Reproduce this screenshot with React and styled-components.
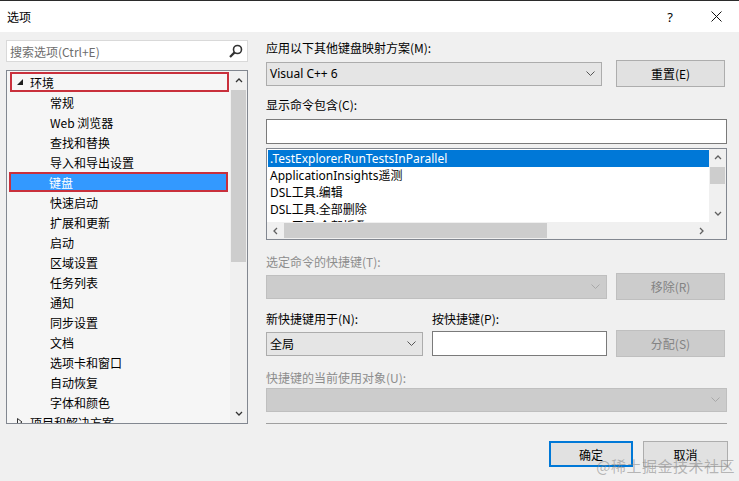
import React from 'react';
import styled, { createGlobalStyle } from 'styled-components';

const GlobalStyle = createGlobalStyle`
  body {
    margin: 0;
    background: #f0f0f0;
  }
  * { box-sizing: border-box; }
`;

const Window = styled.div`
  position: relative;
  width: 739px;
  height: 481px;
  background: #f0f0f0;
  font-family: "Noto Sans", "Noto Sans CJK SC", sans-serif;
  font-size: 12px;
  color: #000;
  overflow: hidden;
  border-top: 1px solid #2b2b2b;
`;

const TitleBar = styled.div`
  height: 31px;
  background: #fff;
  display: flex;
  align-items: center;
  padding-left: 7px;
`;

const Title = styled.div`
  flex: 1;
  font-family: "Noto Sans CJK SC", sans-serif;
  font-size: 12px;
  padding-bottom: 1px;
`;

const TitleButton = styled.div`
  width: ${p => p.$w}px;
  display: flex;
  justify-content: center;
  align-items: center;
  font-size: 13px;
`;

const Body = styled.div`
  display: grid;
  grid-template-columns: 242px 461px;
  column-gap: 18px;
  padding: 8px 0 0 6px;
`;

const Column = styled.div`
  display: flex;
  flex-direction: column;
`;

const SearchBox = styled.div`
  height: 22px;
  background: #fff;
  border: 1px solid #d9d9d9;
  display: flex;
  align-items: center;
  padding: 0 4px 0 3px;
  color: #6d6d6d;
  font-family: "Noto Sans CJK SC", sans-serif;
  font-size: 12px;
  justify-content: space-between;
`;

const Tree = styled.div`
  margin-top: 8px;
  height: 354px;
  border: 1px solid #828790;
  background: #f6f6f6;
  display: flex;
  overflow: hidden;
`;

const TreeRows = styled.div`
  flex: 1;
  padding-top: 1px;
  overflow: hidden;
`;

const TreeRow = styled.div`
  height: 20px;
  margin-left: ${p => (p.$selected ? 2 : 3)}px;
  width: 219px;
  display: flex;
  align-items: center;
  padding-left: ${p => p.$indent}px;
  font-family: "Noto Sans CJK SC", sans-serif;
  background: ${p => (p.$selected ? '#3399ff' : 'transparent')};
  color: ${p => (p.$selected ? '#fff' : '#000')};
  box-shadow: ${p => (p.$marked ? 'inset 0 0 0 2px #c9303c' : 'none')};
`;

const Expander = styled.span`
  width: 20px;
  display: flex;
  align-items: center;
  padding-left: 7px;
`;

const VScroll = styled.div`
  width: 17px;
  background: #f0f0f0;
  display: flex;
  flex-direction: column;
  align-items: center;
`;

const ScrollArrow = styled.div`
  height: ${p => p.$h || 17}px;
  width: 100%;
  display: flex;
  align-items: center;
  justify-content: center;
`;

const VThumb = styled.div`
  width: 15px;
  height: ${p => p.$h}px;
  margin-top: ${p => p.$top}px;
  background: #cdcdcd;
`;

const Spacer = styled.div`
  flex: 1;
`;

const Label = styled.div`
  height: 16px;
  line-height: 16px;
  margin-top: ${p => p.$mt || 0}px;
  font-family: "Noto Sans CJK SC", sans-serif;
  color: ${p => (p.$disabled ? '#8d8d8d' : '#000')};
  width: ${p => (p.$w ? `${p.$w}px` : 'auto')};
`;

const Row = styled.div`
  display: flex;
  align-items: center;
  height: 27px;
  margin-top: ${p => p.$mt || 0}px;
  gap: 9px;
`;

const LabelRow = styled.div`
  display: flex;
  margin-top: ${p => p.$mt || 0}px;
  gap: 0;
`;

const Combo = styled.div`
  width: ${p => p.$w}px;
  height: 24px;
  background: ${p => (p.$disabled ? '#cccccc' : '#e5e5e5')};
  border: 1px solid ${p => (p.$disabled ? '#bfbfbf' : '#acacac')};
  display: flex;
  align-items: center;
  justify-content: space-between;
  padding: 0 6px 0 3px;
  font-family: "Noto Sans", "Noto Sans CJK SC", sans-serif;
  margin-right: ${p => p.$mr || 0}px;
`;

const Button = styled.div`
  width: ${p => p.$w || 109}px;
  height: ${p => p.$h || 27}px;
  display: flex;
  align-items: center;
  justify-content: center;
  margin-left: ${p => p.$ml || 0}px;
  font-family: "Noto Sans CJK SC", sans-serif;
  background: ${p => (p.$disabled ? '#cccccc' : '#e1e1e1')};
  border: ${p =>
    p.$default ? '2px solid #0078d7' : `1px solid ${p.$disabled ? '#bfbfbf' : '#adadad'}`};
  color: ${p => (p.$disabled ? '#838383' : '#000')};
`;

const TextInput = styled.div`
  width: ${p => p.$w}px;
  height: 25px;
  margin-top: ${p => p.$mt || 0}px;
  background: #fff;
  border: 1px solid #7a7a7a;
`;

const ListBox = styled.div`
  margin-top: 4px;
  height: 92px;
  border: 1px solid #828790;
  background: #fff;
  display: grid;
  grid-template-columns: 1fr 17px;
  grid-template-rows: 73px 17px;
`;

const ListItems = styled.div`
  overflow: hidden;
  padding: 1px 0 0 1px;
`;

const ListItem = styled.div`
  height: 17px;
  line-height: 17px;
  padding-left: 2px;
  font-family: "Noto Sans", "Noto Sans CJK SC", sans-serif;
  font-size: 12px;
  white-space: nowrap;
  background: ${p => (p.$selected ? '#0078d7' : 'transparent')};
  color: ${p => (p.$selected ? '#fff' : '#000')};
`;

const HScroll = styled.div`
  background: #f0f0f0;
  display: flex;
  align-items: center;
`;

const HThumb = styled.div`
  width: 263px;
  height: 15px;
  background: #cdcdcd;
`;

const Corner = styled.div`
  background: #f0f0f0;
`;

const Separator = styled.div`
  margin-top: 11px;
  height: 1px;
  background: #a0a0a0;
`;

const Footer = styled.div`
  display: flex;
  justify-content: flex-end;
  gap: 10px;
  padding: 17px 11px 0 0;
`;

const Watermark = styled.div`
  position: absolute;
  right: 4px;
  bottom: 5px;
  font-family: "Noto Sans CJK SC", sans-serif;
  font-size: 15px;
  color: rgba(130, 130, 130, 0.55);
  letter-spacing: 0.5px;
`;

const Chevron = ({ dir = 'down', color = '#606060', size = 8 }) => {
  const pts = {
    down: '1,2 4,5 7,2',
    up: '1,5 4,2 7,5',
    left: '5,1 2,4 5,7',
    right: '3,1 6,4 3,7',
  }[dir];
  return (
    <svg width={size} height={size} viewBox="0 0 8 8">
      <polyline points={pts} fill="none" stroke={color} strokeWidth="1.3" />
    </svg>
  );
};

const ComboArrow = ({ color = '#555' }) => (
  <svg width="9" height="6" viewBox="0 0 9 6">
    <polyline points="0.5,0.5 4.5,4.5 8.5,0.5" fill="none" stroke={color} strokeWidth="1" />
  </svg>
);

const SearchIcon = () => (
  <svg width="14" height="14" viewBox="0 0 14 14">
    <circle cx="8.5" cy="5.5" r="4" fill="none" stroke="#333" strokeWidth="1.6" />
    <line x1="5.6" y1="8.4" x2="1" y2="13" stroke="#333" strokeWidth="2.2" />
  </svg>
);

const Expanded = () => (
  <svg width="6" height="6" viewBox="0 0 6 6">
    <polygon points="6,0 6,6 0,6" fill="#1e1e1e" />
  </svg>
);

const Collapsed = () => (
  <svg width="6" height="8" viewBox="0 0 6 8">
    <polygon points="0.5,0.5 5,4 0.5,7.5" fill="none" stroke="#333" strokeWidth="1" />
  </svg>
);

const CloseIcon = () => (
  <svg width="11" height="11" viewBox="0 0 11 11">
    <line x1="0.5" y1="0.5" x2="10.5" y2="10.5" stroke="#111" strokeWidth="1" />
    <line x1="10.5" y1="0.5" x2="0.5" y2="10.5" stroke="#111" strokeWidth="1" />
  </svg>
);

const children = [
  '常规', 'Web 浏览器', '查找和替换', '导入和导出设置', '键盘', '快速启动', '扩展和更新',
  '启动', '区域设置', '任务列表', '通知', '同步设置', '文档', '选项卡和窗口', '自动恢复', '字体和颜色',
];

const commands = [
  '.TestExplorer.RunTestsInParallel',
  'ApplicationInsights遥测',
  'DSL工具.编辑',
  'DSL工具.全部删除',
  'DSL工具.全部折叠',
];

export default function App() {
  return (
    <>
      <GlobalStyle />
      <Window>
        <TitleBar>
          <Title>选项</Title>
          <TitleButton $w={46}>?</TitleButton>
          <TitleButton $w={46}><CloseIcon /></TitleButton>
        </TitleBar>
        <Body>
          <Column>
            <SearchBox>
              <span>搜索选项(Ctrl+E)</span>
              <SearchIcon />
            </SearchBox>
            <Tree>
              <TreeRows>
                <TreeRow $indent={0} $marked>
                  <Expander><Expanded /></Expander>
                  环境
                </TreeRow>
                {children.map(c => (
                  <TreeRow key={c} $indent={40} $selected={c === '键盘'} $marked={c === '键盘'}>
                    {c}
                  </TreeRow>
                ))}
                <TreeRow $indent={0}>
                  <Expander><Collapsed /></Expander>
                  项目和解决方案
                </TreeRow>
              </TreeRows>
              <VScroll>
                <ScrollArrow $h={19}><Chevron dir="up" color="#333" /></ScrollArrow>
                <VThumb $h={172} $top={0} />
                <Spacer />
                <ScrollArrow $h={19}><Chevron dir="down" color="#333" /></ScrollArrow>
              </VScroll>
            </Tree>
          </Column>

          <Column>
            <Label>应用以下其他键盘映射方案(M):</Label>
            <Row $mt={4}>
              <Combo $w={336} $mr={5}>
                <span>Visual C++ 6</span>
                <ComboArrow />
              </Combo>
              <Button>重置(E)</Button>
            </Row>
            <Label $mt={10}>显示命令包含(C):</Label>
            <TextInput $w={461} $mt={6} />
            <ListBox>
              <ListItems>
                {commands.map((c, i) => (
                  <ListItem key={c} $selected={i === 0}>{c}</ListItem>
                ))}
              </ListItems>
              <VScroll>
                <ScrollArrow><Chevron dir="up" /></ScrollArrow>
                <VThumb $h={17} $top={1} />
                <Spacer />
                <ScrollArrow><Chevron dir="down" /></ScrollArrow>
              </VScroll>
              <HScroll>
                <ScrollArrow style={{ width: 17 }}><Chevron dir="left" /></ScrollArrow>
                <HThumb />
                <Spacer />
                <ScrollArrow style={{ width: 17 }}><Chevron dir="right" /></ScrollArrow>
              </HScroll>
              <Corner />
            </ListBox>
            <Label $mt={14} $disabled>选定命令的快捷键(T):</Label>
            <Row $mt={3}>
              <Combo $w={341} $disabled>
                <span />
                <ComboArrow color="#a8a8a8" />
              </Combo>
              <Button $disabled>移除(R)</Button>
            </Row>
            <LabelRow $mt={11}>
              <Label $w={166}>新快捷键用于(N):</Label>
              <Label>按快捷键(P):</Label>
            </LabelRow>
            <Row $mt={3}>
              <Combo $w={157}>
                <span style={{ fontFamily: '"Noto Sans CJK SC", sans-serif' }}>全局</span>
                <ComboArrow />
              </Combo>
              <TextInput $w={175} />
              <Button $disabled>分配(S)</Button>
            </Row>
            <Label $mt={13} $disabled>快捷键的当前使用对象(U):</Label>
            <Combo $w={461} $disabled style={{ marginTop: 2 }}>
              <span />
              <ComboArrow color="#a8a8a8" />
            </Combo>
            <Separator />
          </Column>
        </Body>
        <Footer>
          <Button $w={84} $h={26} $default>确定</Button>
          <Button $w={85} $h={26}>取消</Button>
        </Footer>
        <Watermark>@稀土掘金技术社区</Watermark>
      </Window>
    </>
  );
}
